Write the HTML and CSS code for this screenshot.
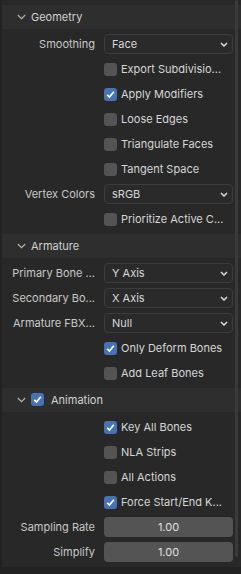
FILE: index.html
```html
<!DOCTYPE html>
<html>
<head>
<meta charset="utf-8">
<link rel="stylesheet" href="styles.css">
</head>
<body>
<div class="region">
  <section class="panel">
    <header class="panel-head">
      <svg class="chev" width="9" height="6" viewBox="0 0 9 6"><path d="M0.8 1 L4.5 4.6 L8.2 1" fill="none" stroke="#b4b4b4" stroke-width="1.2"/></svg>
      <span>Geometry</span>
    </header>
    <div class="panel-body">
      <div class="row"><span class="label">Smoothing</span><div class="select"><span>Face</span><svg width="8" height="5" viewBox="0 0 8 5"><path d="M1 1 L4 4 L7 1" fill="none" stroke="#dcdcdc" stroke-width="1.5"/></svg></div></div>
      <div class="row"><span class="label"></span><div class="check"><span class="box"></span><span>Export Subdivisio...</span></div></div>
      <div class="row"><span class="label"></span><div class="check"><span class="box on"><svg width="11" height="11" viewBox="0 0 11 11"><path d="M2.2 5.8 L4.5 8 L8.8 2.8" fill="none" stroke="#fff" stroke-width="1.7"/></svg></span><span>Apply Modifiers</span></div></div>
      <div class="row"><span class="label"></span><div class="check"><span class="box"></span><span>Loose Edges</span></div></div>
      <div class="row"><span class="label"></span><div class="check"><span class="box"></span><span>Triangulate Faces</span></div></div>
      <div class="row"><span class="label"></span><div class="check"><span class="box"></span><span>Tangent Space</span></div></div>
      <div class="row"><span class="label">Vertex Colors</span><div class="select"><span>sRGB</span><svg width="8" height="5" viewBox="0 0 8 5"><path d="M1 1 L4 4 L7 1" fill="none" stroke="#dcdcdc" stroke-width="1.5"/></svg></div></div>
      <div class="row"><span class="label"></span><div class="check"><span class="box"></span><span>Prioritize Active C...</span></div></div>
    </div>
  </section>

  <section class="panel">
    <header class="panel-head">
      <svg class="chev" width="9" height="6" viewBox="0 0 9 6"><path d="M0.8 1 L4.5 4.6 L8.2 1" fill="none" stroke="#b4b4b4" stroke-width="1.2"/></svg>
      <span>Armature</span>
    </header>
    <div class="panel-body">
      <div class="row"><span class="label">Primary Bone ...</span><div class="select"><span>Y Axis</span><svg width="8" height="5" viewBox="0 0 8 5"><path d="M1 1 L4 4 L7 1" fill="none" stroke="#dcdcdc" stroke-width="1.5"/></svg></div></div>
      <div class="row"><span class="label">Secondary Bo...</span><div class="select"><span>X Axis</span><svg width="8" height="5" viewBox="0 0 8 5"><path d="M1 1 L4 4 L7 1" fill="none" stroke="#dcdcdc" stroke-width="1.5"/></svg></div></div>
      <div class="row"><span class="label">Armature FBX...</span><div class="select"><span>Null</span><svg width="8" height="5" viewBox="0 0 8 5"><path d="M1 1 L4 4 L7 1" fill="none" stroke="#dcdcdc" stroke-width="1.5"/></svg></div></div>
      <div class="row"><span class="label"></span><div class="check"><span class="box on"><svg width="11" height="11" viewBox="0 0 11 11"><path d="M2.2 5.8 L4.5 8 L8.8 2.8" fill="none" stroke="#fff" stroke-width="1.7"/></svg></span><span>Only Deform Bones</span></div></div>
      <div class="row"><span class="label"></span><div class="check"><span class="box"></span><span>Add Leaf Bones</span></div></div>
    </div>
  </section>

  <section class="panel">
    <header class="panel-head">
      <svg class="chev" width="9" height="6" viewBox="0 0 9 6"><path d="M0.8 1 L4.5 4.6 L8.2 1" fill="none" stroke="#b4b4b4" stroke-width="1.2"/></svg>
      <span class="box on head-box"><svg width="11" height="11" viewBox="0 0 11 11"><path d="M2.2 5.8 L4.5 8 L8.8 2.8" fill="none" stroke="#fff" stroke-width="1.7"/></svg></span>
      <span>Animation</span>
    </header>
    <div class="panel-body">
      <div class="row"><span class="label"></span><div class="check"><span class="box on"><svg width="11" height="11" viewBox="0 0 11 11"><path d="M2.2 5.8 L4.5 8 L8.8 2.8" fill="none" stroke="#fff" stroke-width="1.7"/></svg></span><span>Key All Bones</span></div></div>
      <div class="row"><span class="label"></span><div class="check"><span class="box"></span><span>NLA Strips</span></div></div>
      <div class="row"><span class="label"></span><div class="check"><span class="box"></span><span>All Actions</span></div></div>
      <div class="row"><span class="label"></span><div class="check"><span class="box on"><svg width="11" height="11" viewBox="0 0 11 11"><path d="M2.2 5.8 L4.5 8 L8.8 2.8" fill="none" stroke="#fff" stroke-width="1.7"/></svg></span><span>Force Start/End K...</span></div></div>
      <div class="row"><span class="label">Sampling Rate</span><div class="number">1.00</div></div>
      <div class="row"><span class="label">Simplify</span><div class="number">1.00</div></div>
    </div>
  </section>
  <div class="scrollbar"></div>
</div>
</body>
</html>
```

FILE: styles.css
```css
* { box-sizing: border-box; }
html, body {
  margin: 0;
  padding: 0;
  background: #222222;
  width: 241px;
  height: 574px;
  overflow: hidden;
}
body {
  font-family: "Inter", "DejaVu Sans", sans-serif;
  font-size: 11px;
  color: #cfcfcf;
}
.region {
  position: relative;
  margin-left: 2px;
  background: #282828;
  padding: 5px 0 5px 0;
  display: flex;
  flex-direction: column;
  gap: 5px;
}
.panel-head {
  height: 24px;
  background: #2e2e2e;
  display: flex;
  align-items: center;
  padding-left: 15px;
  color: #d2d2d2;
  padding-bottom: 1px;
}
.chev { margin-right: 5px; margin-top: 1px; }
.head-box { margin-right: 7px; }
.panel-body {
  padding: 5px 8px 0 0;
  display: flex;
  flex-direction: column;
  gap: 5px;
}
.row {
  display: grid;
  grid-template-columns: 1fr 129px;
  column-gap: 9px;
  height: 20px;
  align-items: center;
}
.label {
  text-align: right;
  color: #c8c8c8;
  white-space: nowrap;
  overflow: hidden;
}
.select {
  height: 20px;
  border: 1px solid #3c3c3c;
  background: #2a2a2a;
  border-radius: 4px;
  display: flex;
  align-items: center;
  justify-content: space-between;
  padding: 0 4px 0 7px;
  color: #d8d8d8;
}
.check {
  display: flex;
  align-items: center;
  gap: 4px;
  color: #d6d6d6;
  white-space: nowrap;
}
.box {
  width: 13px;
  height: 13px;
  border-radius: 3px;
  background: #545454;
  display: inline-flex;
  align-items: center;
  justify-content: center;
  flex: none;
}
.box.on { background: #4772b3; }
.number {
  height: 20px;
  background: #545454;
  border-radius: 4px;
  display: flex;
  align-items: center;
  justify-content: center;
  color: #e0e0e0;
}
.scrollbar {
  position: absolute;
  left: 233px;
  top: 0;
  width: 3px;
  height: 557px;
  background: #3a3a3a;
  border-radius: 2px;
}
```
